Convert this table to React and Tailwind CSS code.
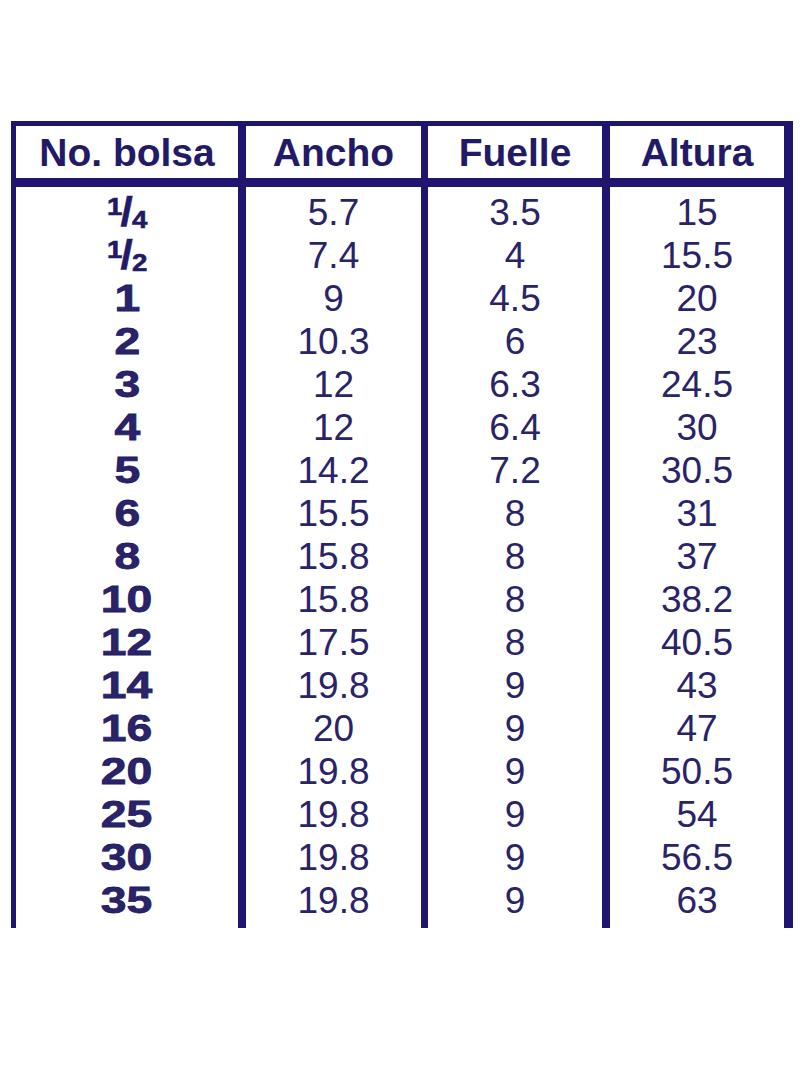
import React from 'react';

const ROWS = [
  ['1/4', '5.7', '3.5', '15'],
  ['1/2', '7.4', '4', '15.5'],
  ['1', '9', '4.5', '20'],
  ['2', '10.3', '6', '23'],
  ['3', '12', '6.3', '24.5'],
  ['4', '12', '6.4', '30'],
  ['5', '14.2', '7.2', '30.5'],
  ['6', '15.5', '8', '31'],
  ['8', '15.8', '8', '37'],
  ['10', '15.8', '8', '38.2'],
  ['12', '17.5', '8', '40.5'],
  ['14', '19.8', '9', '43'],
  ['16', '20', '9', '47'],
  ['20', '19.8', '9', '50.5'],
  ['25', '19.8', '9', '54'],
  ['30', '19.8', '9', '56.5'],
  ['35', '19.8', '9', '63'],
];

// widths include the right-hand separator line
const COLUMNS = [
  { title: 'No. bolsa', width: 'w-[230px]', sep: 'border-r-[8px]' },
  { title: 'Ancho', width: 'w-[182px]', sep: 'border-r-[7px]' },
  { title: 'Fuelle', width: 'w-[182px]', sep: 'border-r-[8px]' },
  { title: 'Altura', width: 'w-[174px]', sep: '' },
];

// Fractions in the first column: small 1, big slash, small denominator
function BagNumber({ value }) {
  if (value.includes('/')) {
    const [top, bottom] = value.split('/');
    return (
      <span className="inline-flex items-start font-bold text-[#221a66] [-webkit-text-stroke:0.6px_#221a66]">
        <span className="text-[24px] leading-none mt-[1px] scale-x-[1.15]">{top}</span>
        <span className="text-[40px] leading-none -mt-[2px] scale-x-[1.1]">/</span>
        <span className="text-[24px] leading-none mt-[14px] scale-x-[1.15]">{bottom}</span>
      </span>
    );
  }
  return (
    <span className="inline-block font-bold scale-x-[1.25] [-webkit-text-stroke:0.8px_#221a66]">
      {value}
    </span>
  );
}

export default function App() {
  return (
    <div
      className="min-h-[1092px] bg-white pt-[121px] pl-[11px]"
      style={{ fontFamily: "'Liberation Sans', Arial, sans-serif" }}
    >
      <div className="flex w-[782px] h-[807px] overflow-hidden border-t-[5px] border-l-[5px] border-r-[9px] border-[#1f146e]">
        {COLUMNS.map((col, ci) => (
          <div key={col.title} className={`flex flex-col shrink-0 ${col.width} ${col.sep} border-[#1f146e]`}>
            <div className="h-[61px] shrink-0 border-b-[9px] border-[#1f146e] flex items-center justify-center">
              <span className="text-[39px] font-bold text-[#221a66] leading-none">{col.title}</span>
            </div>
            <div className="pt-[4px] flex flex-col">
              {ROWS.map((row, ri) => (
                <div
                  key={ri}
                  className="h-[43px] shrink-0 flex items-center justify-center text-[37px] leading-[43px] text-[#2a2368]"
                >
                  {ci === 0 ? <BagNumber value={row[0]} /> : row[ci]}
                </div>
              ))}
            </div>
          </div>
        ))}
      </div>
    </div>
  );
}
